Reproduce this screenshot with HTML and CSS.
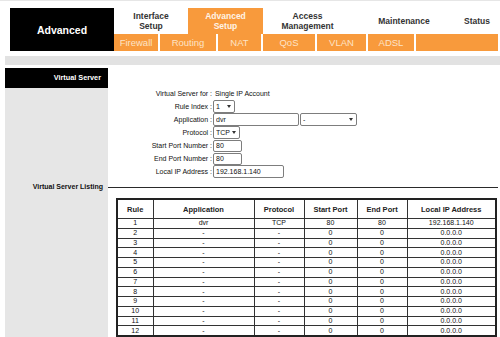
FILE: index.html
```html
<!DOCTYPE html>
<html lang="en">
<head>
    <meta charset="UTF-8">
    <title>Advanced - Virtual Server</title>
    <link rel="stylesheet" href="styles.css">
</head>
<body>
    <div class="header">
        <div class="brand">Advanced</div>
        <div class="nav">
            <div class="tabs">
                <div class="tab tab-interface">Interface<br>Setup</div>
                <div class="tab tab-advanced active">Advanced<br>Setup</div>
                <div class="tab tab-access">Access<br>Management</div>
                <div class="tab tab-maint">Maintenance</div>
                <div class="tab tab-status">Status</div>
            </div>
            <div class="subnav">
                <a class="sub-firewall">Firewall</a>
                <a class="sub-routing">Routing</a>
                <a class="sub-nat">NAT</a>
                <a class="sub-qos">QoS</a>
                <a class="sub-vlan">VLAN</a>
                <a class="sub-adsl">ADSL</a>
            </div>
        </div>
    </div>

    <div class="band"></div>

    <div class="content">
        <div class="side-head">Virtual Server</div>
        <div></div>

        <div class="side"></div>
        <div class="form">
            <div class="label">Virtual Server for :</div>
            <div class="value">&nbsp;Single IP Account</div>

            <div class="label">Rule Index :</div>
            <div class="value">
                <span class="sel sel-rule"><select><option>1</option></select></span>
            </div>

            <div class="label">Application :</div>
            <div class="value">
                <input type="text" class="in in-app" value="dvr">
                <span class="sel sel-app"><select><option>-</option></select></span>
            </div>

            <div class="label">Protocol :</div>
            <div class="value">
                <span class="sel sel-proto"><select><option>TCP</option></select></span>
            </div>

            <div class="label">Start Port Number :</div>
            <div class="value"><input type="text" class="in in-port" value="80"></div>

            <div class="label">End Port Number :</div>
            <div class="value"><input type="text" class="in in-port" value="80"></div>

            <div class="label">Local IP Address :</div>
            <div class="value"><input type="text" class="in in-ip" value="192.168.1.140"></div>
        </div>

        <div class="side side-title">Virtual Server Listing</div>
        <div class="rule-line"><div class="line"></div></div>

        <div class="side"></div>
        <div class="listing-wrap">
            <table class="listing">
                <colgroup>
                    <col style="width:36px">
                    <col style="width:101px">
                    <col style="width:50px">
                    <col style="width:53px">
                    <col style="width:50px">
                    <col>
                </colgroup>
                <thead>
                    <tr>
                        <th>Rule</th>
                        <th>Application</th>
                        <th>Protocol</th>
                        <th>Start Port</th>
                        <th>End Port</th>
                        <th>Local IP Address</th>
                    </tr>
                </thead>
                <tbody id="rules"></tbody>
            </table>
        </div>
    </div>

    <script>
        // fill the listing, only rule 1 is set
        var rows = '';
        for (var i = 1; i <= 12; i++) {
            if (i === 1) {
                rows += '<tr><td>1</td><td>dvr</td><td>TCP</td><td>80</td><td>80</td><td>192.168.1.140</td></tr>';
            } else {
                rows += '<tr><td>' + i + '</td><td>-</td><td>-</td><td>0</td><td>0</td><td>0.0.0.0</td></tr>';
            }
        }
        document.getElementById('rules').innerHTML = rows;
    </script>
</body>
</html>
```

FILE: styles.css
```css
body {
    margin: 0;
    padding-top: 7px;
    border-top: 1px solid #e6e6e6;
    font-family: "Liberation Sans", Arial, sans-serif;
    font-size: 7px;
    color: #111;
    background: #fff;
}
.header {
    display: flex;
    height: 43px;
    margin-left: 10px;
    margin-right: 2px;
}
.brand {
    width: 104px;
    background-color: #000;
    color: #fff;
    font-size: 10.5px;
    font-weight: bold;
    display: flex;
    align-items: center;
    justify-content: center;
}
.nav {
    flex: 1;
    display: flex;
    flex-direction: column;
}
.tabs {
    height: 26px;
    display: flex;
}
.tab {
    display: flex;
    align-items: center;
    justify-content: center;
    text-align: center;
    font-size: 8.5px;
    font-weight: bold;
    line-height: 10px;
    color: #333;
}
.tab.active {
    background-color: #f89a3c;
    color: #fff3e6;
}
.tab-interface { width: 74px; }
.tab-advanced { width: 75px; }
.tab-access { width: 89px; }
.tab-maint { width: 104px; }
.tab-status { flex: 1; }
.subnav {
    flex: 1;
    display: flex;
    background-color: #f89a3c;
}
.subnav a {
    display: flex;
    align-items: center;
    justify-content: center;
    font-size: 9.5px;
    color: #fde3c6;
    border-right: 2px solid #fff;
    box-sizing: border-box;
}
.sub-firewall { width: 46px; }
.sub-routing { width: 58px; }
.sub-nat { width: 45px; }
.sub-qos { width: 54px; }
.sub-vlan { width: 51px; }
.sub-adsl { width: 48px; }
.band {
    height: 9px;
    margin: 5px 0 0 5px;
    background-color: #e2e2e2;
}
.content {
    display: grid;
    grid-template-columns: 103px 1fr;
    margin: 3px 2px 0 5px;
}
.side-head {
    height: 20px;
    line-height: 20px;
    background-color: #000;
    color: #fff;
    font-weight: bold;
    font-size: 7.3px;
    text-align: right;
    padding-right: 7px;
}
.side {
    background-color: #e6e6e6;
}
.side-title {
    height: 10px;
    line-height: 10px;
    font-weight: bold;
    font-size: 7px;
    text-align: right;
    padding-right: 5px;
}
.form {
    display: grid;
    grid-template-columns: 104px 1fr;
    grid-auto-rows: 13px;
    padding: 0 0 4px;
    margin-top: -1px;
}
.label {
    text-align: right;
    line-height: 13px;
    white-space: nowrap;
}
.value {
    display: flex;
    align-items: center;
    gap: 1px;
    padding-left: 1px;
    white-space: nowrap;
}
.in,
.sel select {
    height: 12px;
    box-sizing: border-box;
    border: 1px solid #7d7d7d;
    border-radius: 2px;
    padding: 0 2px;
    font-family: "Liberation Sans", Arial, sans-serif;
    font-size: 7px;
    color: #111;
    background: #fff;
    margin: 0;
}
.in-app { width: 86px; height: 13px; }
.in-port { width: 29px; }
.in-ip { width: 71px; height: 13px; }
.sel {
    position: relative;
    display: inline-block;
}
.sel select {
    appearance: none;
    -webkit-appearance: none;
    width: 100%;
    height: 13px;
    outline: none;
}
.sel::after {
    content: "";
    position: absolute;
    right: 4px;
    top: 5px;
    border-left: 2.5px solid transparent;
    border-right: 2.5px solid transparent;
    border-top: 3px solid #333;
}
.sel-rule { width: 22px; }
.sel-proto { width: 27px; }
.sel-app { width: 57px; }
.rule-line {
    display: flex;
    align-items: center;
}
.line {
    flex: 1;
    height: 1px;
    background-color: #2a2a2a;
}
.listing-wrap {
    padding: 6px 1px 0 8px;
}
.listing {
    width: 100%;
    border-collapse: collapse;
    border: 2px solid #222;
    table-layout: fixed;
}
.listing th {
    height: 18px;
    font-size: 7.5px;
    font-weight: bold;
    color: #222;
    border: 1px solid #333;
    padding: 0;
}
.listing td {
    height: 8.75px;
    line-height: 8px;
    padding: 0;
    text-align: center;
    border: 1px solid #333;
    font-size: 7px;
}
```
